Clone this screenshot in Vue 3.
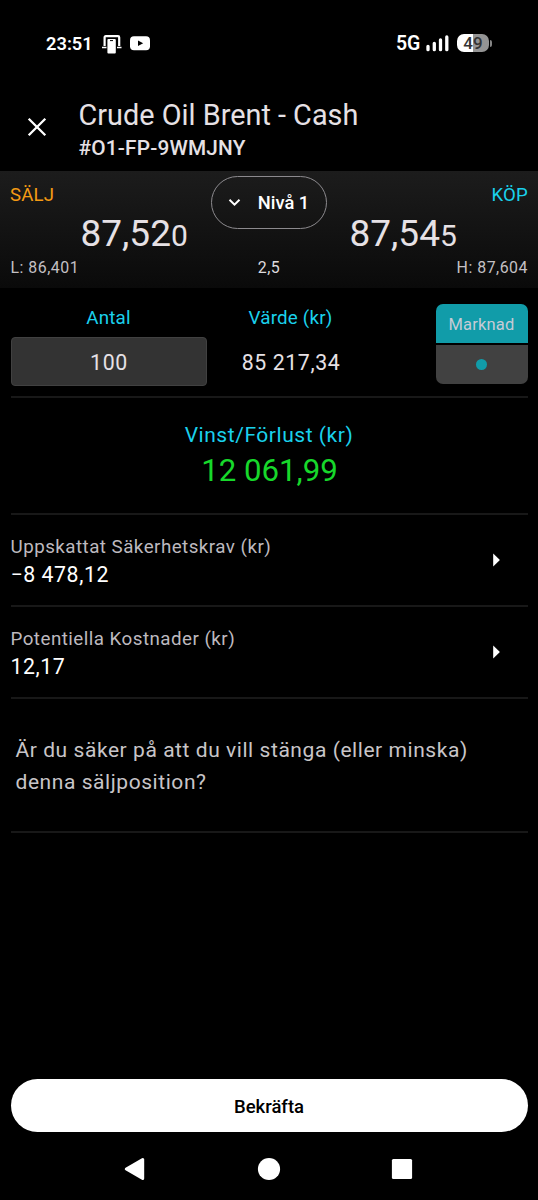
<script setup>
const quotes = {
  sell: { main: '87,52', last: '0' },
  buy: { main: '87,54', last: '5' },
}
const details = [
  { label: 'Uppskattat Säkerhetskrav (kr)', value: '−8 478,12', cls: 'margin' },
  { label: 'Potentiella Kostnader (kr)', value: '12,17', cls: 'costs' },
]
</script>

<template>
  <main class="screen">
    <div class="status">
      <span class="time">23:51</span>
      <svg class="cast" width="20" height="20" viewBox="0 0 20 20">
        <path d="M2.6 11V2.4Q2.6 1.2 3.8 1.2H16Q17.2 1.2 17.2 2.4V11" fill="none" stroke="#fff" stroke-width="2.2" />
        <path d="M0 12.6H4.5M15 12.6H19.5" stroke="#fff" stroke-width="1.5" />
        <rect x="5.4" y="4" width="8.4" height="14.5" rx="1" fill="#fff" />
        <path d="M8 5.6H11" stroke="#000" stroke-width="1" />
      </svg>
      <svg class="tube" width="20" height="15" viewBox="0 0 20 15">
        <rect x="0" y="0.3" width="20" height="14" rx="4" fill="#fff" />
        <path d="M8 4.4L13.2 7.2L8 10Z" fill="#000" />
      </svg>
      <span class="net">5G</span>
      <svg class="signal" width="24" height="17" viewBox="0 0 24 17">
        <path d="M2 11.3V14.7M8.3 8.3V14.7M14.5 5V14.7M20.8 2V14.7" stroke="#fff" stroke-width="3.3" stroke-linecap="round" />
      </svg>
      <span class="battery">49</span>
      <i class="tip"></i>
    </div>

    <header class="header">
      <svg class="close" width="20" height="20" viewBox="0 0 20 20">
        <path d="M1.7 1.7L18.3 18.3M18.3 1.7L1.7 18.3" stroke="#fff" stroke-width="2.3" />
      </svg>
      <div>
        <h1>Crude Oil Brent - Cash</h1>
        <p>#O1-FP-9WMJNY</p>
      </div>
    </header>

    <section class="quote">
      <div class="side sell">
        <span class="tag">SÄLJ</span>
        <div class="price">{{ quotes.sell.main }}<small>{{ quotes.sell.last }}</small></div>
        <span class="range">L: 86,401</span>
      </div>
      <div class="mid">
        <button class="level">
          <svg width="13" height="9" viewBox="0 0 13 9"><path d="M1.5 1.7L6.5 6.7L11.5 1.7" fill="none" stroke="#fff" stroke-width="2" /></svg>
          <span>Nivå 1</span>
        </button>
        <span class="spread">2,5</span>
      </div>
      <div class="side buy">
        <span class="tag">KÖP</span>
        <div class="price">{{ quotes.buy.main }}<small>{{ quotes.buy.last }}</small></div>
        <span class="range">H: 87,604</span>
      </div>
    </section>

    <section class="order">
      <div class="qty">
        <span class="cap">Antal</span>
        <div class="field">100</div>
      </div>
      <div class="worth">
        <span class="cap">Värde (kr)</span>
        <div class="amount">85 217,34</div>
      </div>
      <div class="market">
        <span class="on">Marknad</span>
        <span class="off"><i></i></span>
      </div>
    </section>

    <section class="result">
      <span class="rlabel">Vinst/Förlust (kr)</span>
      <span class="rvalue">12 061,99</span>
    </section>

    <section v-for="d in details" :key="d.label" class="detail">
      <div>
        <span class="dlabel">{{ d.label }}</span>
        <span class="dvalue" :class="d.cls">{{ d.value }}</span>
      </div>
      <svg width="7" height="14" viewBox="0 0 7 14"><path d="M0.2 0.5L6.9 7L0.2 13.5Z" fill="#fff" /></svg>
    </section>

    <section class="ask">Är du säker på att du vill stänga (eller minska)<br>denna säljposition?</section>

    <button class="confirm">Bekräfta</button>

    <nav class="nav">
      <svg width="22" height="24" viewBox="0 0 22 24"><path d="M2.3 12L18.7 2.5V21.5Z" fill="#fff" stroke="#fff" stroke-width="3" stroke-linejoin="round" /></svg>
      <svg width="24" height="24" viewBox="0 0 24 24"><circle cx="12" cy="12" r="11.1" fill="#fff" /></svg>
      <svg width="22" height="24" viewBox="0 0 22 24"><rect x="0.9" y="2" width="20.2" height="20" rx="1.5" fill="#fff" /></svg>
    </nav>
  </main>
</template>

<style>
body { background: #000; }
</style>

<style scoped>
* { box-sizing: border-box; }
.screen {
  width: 538px; height: 1200px; background: #000; color: #e6e1e5;
  font-family: Roboto, "Noto Sans", sans-serif;
  display: flex; flex-direction: column; overflow: hidden;
}
.status { height: 88px; flex: none; display: flex; align-items: center; padding: 0 46px 2px 46px; color: #fff; }
.time { font-size: 18.3px; font-weight: 600; width: 56px; white-space: nowrap; }
.cast { margin-top: 3px; }
.tube { margin: 1px 0 0 8px; }
.net { font-size: 19.5px; font-weight: 600; letter-spacing: -0.2px; margin: 1px 0 0 auto; }
.signal { margin: 1px 0 0 6px; }
.battery {
  width: 32px; height: 18px; border-radius: 7px; margin-left: 7px;
  background: linear-gradient(90deg, #fff 50%, #949494 50%);
  color: #333; font-size: 17px; font-weight: 500; line-height: 18.5px; text-align: center;
}
.tip { width: 2px; height: 7px; background: #858585; border-radius: 0 2px 2px 0; margin: 0 0 0 1px; }
.header { height: 83px; flex: none; display: flex; padding-left: 26.5px; }
.close { margin-top: 29px; width: 20px; }
.header > div { margin-left: 32px; }
h1 { font-size: 28.8px; font-weight: 400; line-height: 34px; margin: 10px 0 0; white-space: nowrap; letter-spacing: 0.02px; }
.header p { font-size: 20.8px; font-weight: 500; line-height: 24px; letter-spacing: 0.2px; margin: 4px 0 0; }
.quote {
  height: 117px; flex: none; display: grid; grid-template-columns: 1fr 116px 1fr;
  background: linear-gradient(#1c1c1c, #0a0a0a); padding: 0 10px;
}
.side { display: flex; flex-direction: column; }
.tag { font-size: 18.6px; line-height: 22px; margin-top: 13px; letter-spacing: 0.2px; }
.sell .tag { color: #f59b14; }
.buy .tag { color: #1ad1ec; text-align: right; }
.price { font-size: 37px; line-height: 43px; margin-top: 6px; white-space: nowrap; }
.price small { font-size: 30px; }
.sell .price { padding-left: 70.5px; }
.buy .price { padding-left: 22.5px; }
.range, .spread { font-size: 15.9px; line-height: 20px; letter-spacing: 0.5px; color: #c4c0c4; }
.range { margin-top: 1px; padding-left: 0.5px; }
.buy .range { text-align: right; }
.mid { display: flex; flex-direction: column; align-items: center; }
.level {
  margin: 5px 0 0; width: 116px; height: 53px; border: 1.5px solid #8c8a8e; border-radius: 27px; background: transparent;
  color: #fff; font: 500 18.3px Roboto, sans-serif; display: flex; align-items: center; justify-content: center; gap: 17px; padding: 0 1px 0 0;
}
.spread { margin-top: 29px; color: #dedade; }
.order { height: 110px; flex: none; display: flex; margin: 0 10.5px; border-bottom: 2px solid #181818; }
.qty { width: 196px; text-align: center; }
.cap { display: block; font-size: 18.8px; line-height: 22px; letter-spacing: 0.2px; color: #1ad1ec; margin-top: 19px; }
.field { height: 49px; margin-top: 8px; background: #333; border: 1px solid #414141; border-radius: 4px; font-size: 21.3px; line-height: 49px; letter-spacing: 0.7px; padding-left: 1px; }
.worth { width: 168px; text-align: center; }
.amount { font-size: 21.3px; line-height: 25px; letter-spacing: 0.6px; margin-top: 21px; padding-left: 1px; }
.market { width: 92px; margin: 16px 0 0 auto; height: 80px; border-radius: 7px; overflow: hidden; display: flex; flex-direction: column; gap: 2px; }
.on { height: 39px; background: #119ca9; color: #c6cbd6; font-size: 16.5px; line-height: 41px; letter-spacing: 0.2px; text-align: center; }
.off { height: 39px; background: #414141; display: flex; align-items: center; justify-content: center; }
.off i { width: 11px; height: 11px; border-radius: 50%; background: #119ca9; }
.result { height: 117px; flex: none; margin: 0 10.5px; border-bottom: 2px solid #181818; display: flex; flex-direction: column; align-items: center; }
.rlabel { font-size: 21px; line-height: 24px; letter-spacing: 0.55px; color: #1ad1ec; margin-top: 25px; }
.rvalue { font-size: 31.2px; line-height: 37px; color: #17d82b; margin-top: 5px; padding-left: 1px; }
.detail { height: 92px; flex: none; margin: 0 10.5px; padding-right: 27.5px; border-bottom: 2px solid #181818; display: flex; align-items: center; justify-content: space-between; }
.detail > div { display: flex; flex-direction: column; padding-top: 2px; }
.dlabel { font-size: 18.8px; line-height: 22px; letter-spacing: 0.46px; color: #bdb9bf; }
.dvalue { font-size: 21.3px; line-height: 25px; letter-spacing: 0.55px; color: #fff; margin-top: 4px; }
.ask { height: 134px; flex: none; margin: 0 10.5px; padding: 36px 5px 0; border-bottom: 2px solid #181818; font-size: 21px; line-height: 31.5px; letter-spacing: 0.56px; color: #c8c5c8; white-space: nowrap; }
.confirm { flex: none; height: 53px; margin: auto 10.5px 0; border: 0; border-radius: 27px; background: #fff; color: #000; font: 500 18.5px Roboto, sans-serif; padding: 2px 0 0; }
.nav { height: 68px; flex: none; padding: 5px 125px 0 124px; display: flex; align-items: center; justify-content: space-between; }
</style>
